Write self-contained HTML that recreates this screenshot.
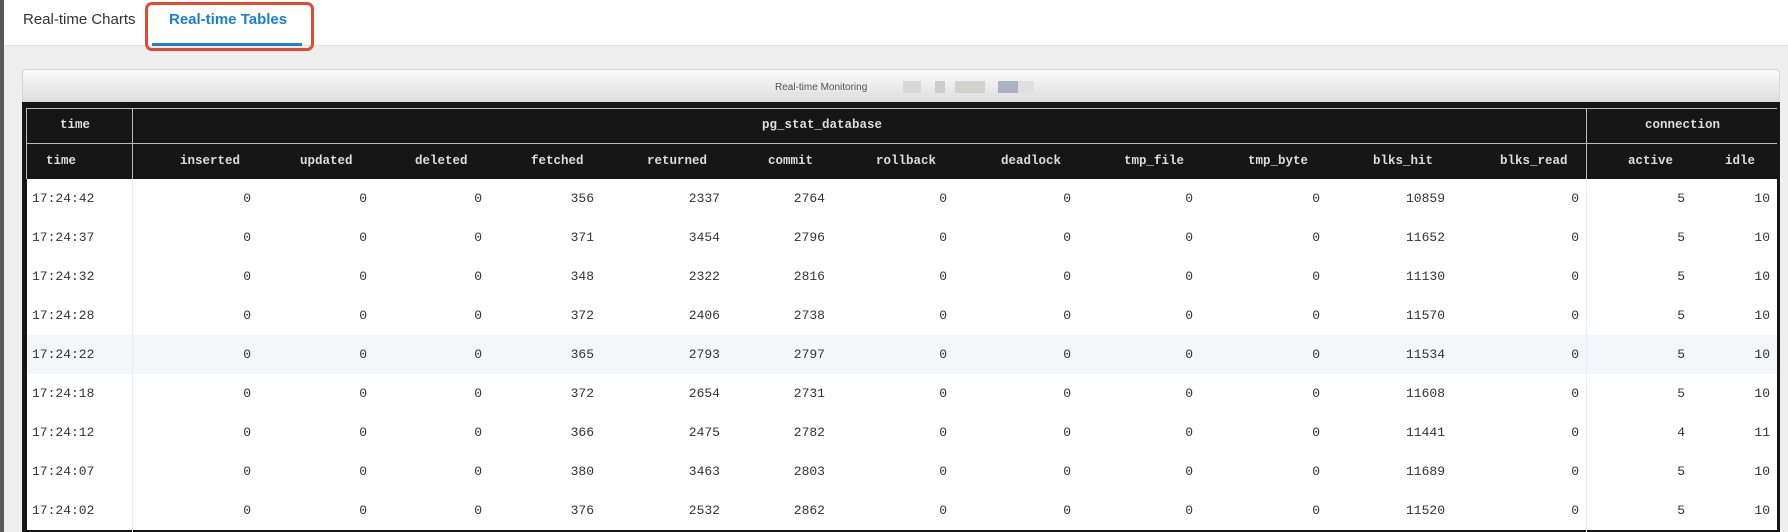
<!DOCTYPE html>
<html><head><meta charset="utf-8"><style>
*{margin:0;padding:0;box-sizing:border-box}
body{width:1788px;height:532px;overflow:hidden;background:#efefef;position:relative;font-family:"Liberation Sans",sans-serif}
.lb{position:absolute;left:0;top:0;width:4px;height:532px;background:#5a5a5a}
.tabs{position:absolute;left:4px;top:0;width:1784px;height:46px;background:#fff;border-bottom:1px solid #e2e2e2}
.tab{position:absolute;top:11px;font-size:15px;color:#333}
.t2{color:#1a7fd6;font-weight:bold;left:165px}
.ul{position:absolute;left:152px;top:43px;width:150px;height:3px;background:#1a7fd6}
.red{position:absolute;left:145px;top:2px;width:169px;height:49px;border:3px solid #e24a32;border-radius:7px}
.ph{position:absolute;left:22px;top:69px;width:1758px;height:33px;background:linear-gradient(#fbfbfb,#dedede);border-radius:4px 4px 0 0;border:1px solid #d8d8d8}
.ph span{position:absolute;left:752px;top:12px;font-size:10px;color:#555}
.blur{position:absolute;top:11px;height:12px}
.blk{position:absolute;left:22px;top:102px;width:1758px;height:430px;background:#161616}
.hd{position:absolute;font-family:"Liberation Mono",monospace;font-size:12.5px;font-weight:bold;color:#ddd;height:35px;line-height:35px;white-space:nowrap}
.hl{position:absolute;background:#bbb}
.row{position:absolute;left:27px;width:1750px;height:39px;background:#fff}
.row.g{background:#f4f6f9}
.row span{position:absolute;top:0;line-height:39px;font-family:"Liberation Mono",monospace;font-size:13px;color:#333;width:100px;text-align:right;white-space:nowrap}
.row span.t{left:5px;text-align:left}
.c1{left:124px}.c2{left:240px}.c3{left:355px}.c4{left:467px}.c5{left:593px}.c6{left:698px}.c7{left:820px}.c8{left:944px}.c9{left:1066px}.c10{left:1193px}.c11{left:1318px}.c12{left:1452px}.c13{left:1558px}.c14{left:1643px}
.vd{position:absolute;top:179px;height:353px;width:1px;background:#e6edf5}
</style></head><body>
<div class="lb"></div>
<div class="tabs">
<div class="tab" style="left:19px">Real-time Charts</div>
<div class="tab t2">Real-time Tables</div>
</div>
<div class="ul"></div>
<div class="red"></div>
<div class="ph"><span>Real-time Monitoring</span>
<div class="blur" style="left:880px;width:18px;background:#d8d8d8"></div>
<div class="blur" style="left:912px;width:10px;background:#ccc"></div>
<div class="blur" style="left:932px;width:30px;background:#d2d2cc"></div>
<div class="blur" style="left:975px;width:20px;background:#a8b4c4"></div>
<div class="blur" style="left:995px;width:16px;background:#e0e0e0"></div>
</div>
<div class="blk"></div>
<div class="hl" style="left:26px;top:108px;width:1751px;height:1px"></div>
<div class="hl" style="left:26px;top:143px;width:1751px;height:1px"></div>
<div class="hl" style="left:26px;top:108px;width:1px;height:71px"></div>
<div class="hl" style="left:132px;top:108px;width:1px;height:71px"></div>
<div class="hl" style="left:1586px;top:108px;width:1px;height:71px"></div>
<div class="hd" style="left:60px;top:108px">time</div>
<div class="hd" style="left:762px;top:108px">pg_stat_database</div>
<div class="hd" style="left:1645px;top:108px">connection</div>
<div class="hd" style="left:46px;top:144px">time</div>
<div class="hd" style="left:180px;top:144px">inserted</div>
<div class="hd" style="left:300px;top:144px">updated</div>
<div class="hd" style="left:415px;top:144px">deleted</div>
<div class="hd" style="left:531px;top:144px">fetched</div>
<div class="hd" style="left:647px;top:144px">returned</div>
<div class="hd" style="left:768px;top:144px">commit</div>
<div class="hd" style="left:876px;top:144px">rollback</div>
<div class="hd" style="left:1001px;top:144px">deadlock</div>
<div class="hd" style="left:1124px;top:144px">tmp_file</div>
<div class="hd" style="left:1248px;top:144px">tmp_byte</div>
<div class="hd" style="left:1373px;top:144px">blks_hit</div>
<div class="hd" style="left:1500px;top:144px">blks_read</div>
<div class="hd" style="left:1628px;top:144px">active</div>
<div class="hd" style="left:1725px;top:144px">idle</div>

<div class="row" style="top:179px"><span class="t">17:24:42</span><span class="c1">0</span><span class="c2">0</span><span class="c3">0</span><span class="c4">356</span><span class="c5">2337</span><span class="c6">2764</span><span class="c7">0</span><span class="c8">0</span><span class="c9">0</span><span class="c10">0</span><span class="c11">10859</span><span class="c12">0</span><span class="c13">5</span><span class="c14">10</span></div>
<div class="row" style="top:218px"><span class="t">17:24:37</span><span class="c1">0</span><span class="c2">0</span><span class="c3">0</span><span class="c4">371</span><span class="c5">3454</span><span class="c6">2796</span><span class="c7">0</span><span class="c8">0</span><span class="c9">0</span><span class="c10">0</span><span class="c11">11652</span><span class="c12">0</span><span class="c13">5</span><span class="c14">10</span></div>
<div class="row" style="top:257px"><span class="t">17:24:32</span><span class="c1">0</span><span class="c2">0</span><span class="c3">0</span><span class="c4">348</span><span class="c5">2322</span><span class="c6">2816</span><span class="c7">0</span><span class="c8">0</span><span class="c9">0</span><span class="c10">0</span><span class="c11">11130</span><span class="c12">0</span><span class="c13">5</span><span class="c14">10</span></div>
<div class="row" style="top:296px"><span class="t">17:24:28</span><span class="c1">0</span><span class="c2">0</span><span class="c3">0</span><span class="c4">372</span><span class="c5">2406</span><span class="c6">2738</span><span class="c7">0</span><span class="c8">0</span><span class="c9">0</span><span class="c10">0</span><span class="c11">11570</span><span class="c12">0</span><span class="c13">5</span><span class="c14">10</span></div>
<div class="row g" style="top:335px"><span class="t">17:24:22</span><span class="c1">0</span><span class="c2">0</span><span class="c3">0</span><span class="c4">365</span><span class="c5">2793</span><span class="c6">2797</span><span class="c7">0</span><span class="c8">0</span><span class="c9">0</span><span class="c10">0</span><span class="c11">11534</span><span class="c12">0</span><span class="c13">5</span><span class="c14">10</span></div>
<div class="row" style="top:374px"><span class="t">17:24:18</span><span class="c1">0</span><span class="c2">0</span><span class="c3">0</span><span class="c4">372</span><span class="c5">2654</span><span class="c6">2731</span><span class="c7">0</span><span class="c8">0</span><span class="c9">0</span><span class="c10">0</span><span class="c11">11608</span><span class="c12">0</span><span class="c13">5</span><span class="c14">10</span></div>
<div class="row" style="top:413px"><span class="t">17:24:12</span><span class="c1">0</span><span class="c2">0</span><span class="c3">0</span><span class="c4">366</span><span class="c5">2475</span><span class="c6">2782</span><span class="c7">0</span><span class="c8">0</span><span class="c9">0</span><span class="c10">0</span><span class="c11">11441</span><span class="c12">0</span><span class="c13">4</span><span class="c14">11</span></div>
<div class="row" style="top:452px"><span class="t">17:24:07</span><span class="c1">0</span><span class="c2">0</span><span class="c3">0</span><span class="c4">380</span><span class="c5">3463</span><span class="c6">2803</span><span class="c7">0</span><span class="c8">0</span><span class="c9">0</span><span class="c10">0</span><span class="c11">11689</span><span class="c12">0</span><span class="c13">5</span><span class="c14">10</span></div>
<div class="row" style="top:491px"><span class="t">17:24:02</span><span class="c1">0</span><span class="c2">0</span><span class="c3">0</span><span class="c4">376</span><span class="c5">2532</span><span class="c6">2862</span><span class="c7">0</span><span class="c8">0</span><span class="c9">0</span><span class="c10">0</span><span class="c11">11520</span><span class="c12">0</span><span class="c13">5</span><span class="c14">10</span></div>
<div class="vd" style="left:132px"></div>
<div class="vd" style="left:1586px"></div>
</body></html>
